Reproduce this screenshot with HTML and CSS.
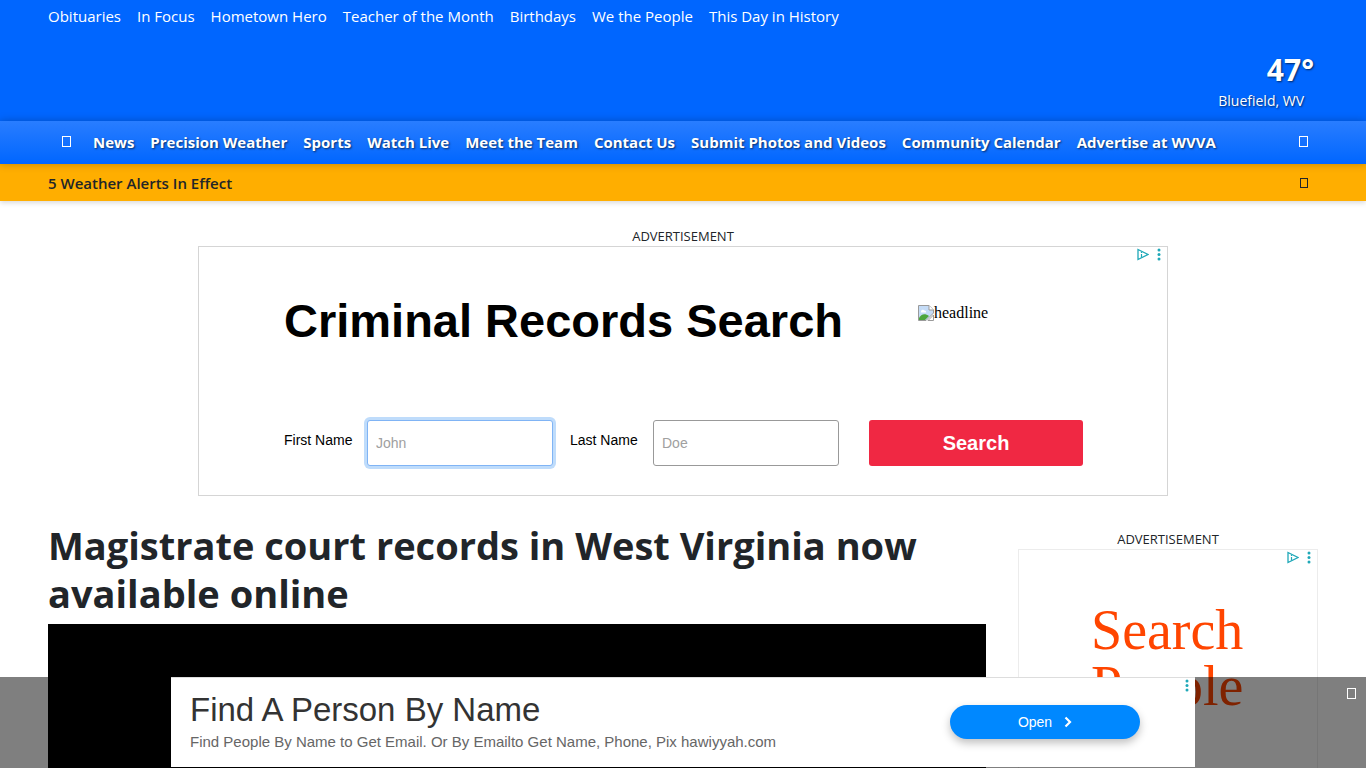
FILE: index.html
```html
<!DOCTYPE html>
<html lang="en">
<head>
    <meta charset="UTF-8">
    <meta name="viewport" content="width=device-width, initial-scale=1.0">
    <title>Magistrate court records in West Virginia now available online</title>
    <link rel="stylesheet" href="styles.css">
</head>
<body>

    <header class="header">
        <nav class="top-links" aria-label="Featured">
            <a href="#">Obituaries</a>
            <a href="#">In Focus</a>
            <a href="#">Hometown Hero</a>
            <a href="#">Teacher of the Month</a>
            <a href="#">Birthdays</a>
            <a href="#">We the People</a>
            <a href="#">This Day in History</a>
        </nav>
        <a class="weather" href="#">
            <span class="temp">47°</span>
            <span class="city">Bluefield, WV</span>
        </a>
    </header>

    <nav class="navbar" aria-label="Main">
        <a class="home" href="#" aria-label="Home"><span class="glyph"></span></a>
        <a href="#">News</a>
        <a href="#">Precision Weather</a>
        <a href="#">Sports</a>
        <a href="#">Watch Live</a>
        <a href="#">Meet the Team</a>
        <a href="#">Contact Us</a>
        <a href="#">Submit Photos and Videos</a>
        <a href="#">Community Calendar</a>
        <a href="#">Advertise at WVVA</a>
        <button class="icon-button search-toggle" type="button" aria-label="Search"><span class="glyph"></span></button>
    </nav>

    <div class="alert-bar">
        <a href="#">5 Weather Alerts In Effect</a>
        <button class="icon-button" type="button" aria-label="Show alerts"><span class="glyph glyph-small"></span></button>
    </div>

    <main>
        <section class="leaderboard">
            <p class="ad-label">ADVERTISEMENT</p>
            <div class="ad-records">
                <div class="ad-choices">
                    <svg width="12" height="13" viewBox="0 0 12 13"><path d="M1 1.500 L11 6.500 L1 11.500 Z" fill="none" stroke="#1fa8b8" stroke-width="1.300"/><path d="M4.500 4 V5 M4.500 6 V9.500" stroke="#1fa8b8" stroke-width="1.200"/></svg>
                    <svg width="4" height="13" viewBox="0 0 4 13" fill="#1fa8b8"><circle cx="2" cy="2" r="1.5"/><circle cx="2" cy="6.5" r="1.5"/><circle cx="2" cy="11" r="1.5"/></svg>
                </div>
                <div class="ad-head">
                    <h2>Criminal Records Search</h2>
                    <span class="broken-image">
                        <svg width="16" height="16" viewBox="0 0 16 16">
                            <path d="M.5.5H11L15.500 5V8L8 15.500H.5Z" fill="#c5dcf7" stroke="#9a9a9a"/>
                            <path d="M11 .5V5H15.500" fill="#fff" stroke="#9a9a9a"/>
                            <path d="M3 6.500a2 2 0 0 1 3.500-1 1.500 1.500 0 0 1 1.500 2H3Z" fill="#fff"/>
                            <path d="M1 13C3 9 7 8 11 11L7 15H1Z" fill="#4da63c"/>
                            <path d="M15.500 10V15.500H10Z" fill="#fff" stroke="#9a9a9a"/>
                        </svg>headline</span>
                </div>
                <form class="ad-form">
                    <label for="first-name">First Name</label>
                    <input class="focused" id="first-name" type="text" placeholder="John">
                    <label for="last-name">Last Name</label>
                    <input id="last-name" type="text" placeholder="Doe">
                    <button type="button">Search</button>
                </form>
            </div>
        </section>

        <div class="content">
            <article>
                <h1>Magistrate court records in West Virginia now available online</h1>
                <div class="video"></div>
            </article>
            <aside>
                <p class="ad-label">ADVERTISEMENT</p>
                <div class="ad-people">
                    <div class="ad-choices">
                        <svg width="12" height="13" viewBox="0 0 12 13"><path d="M1 1.500 L11 6.500 L1 11.500 Z" fill="none" stroke="#1fa8b8" stroke-width="1.300"/><path d="M4.500 4 V5 M4.500 6 V9.500" stroke="#1fa8b8" stroke-width="1.200"/></svg>
                        <svg width="4" height="13" viewBox="0 0 4 13" fill="#1fa8b8"><circle cx="2" cy="2" r="1.5"/><circle cx="2" cy="6.5" r="1.5"/><circle cx="2" cy="11" r="1.5"/></svg>
                    </div>
                    <a href="#">Search People</a>
                </div>
            </aside>
        </div>
    </main>

    <div class="sticky-ad">
        <div class="banner">
            <div class="banner-text">
                <h2>Find A Person By Name</h2>
                <p>Find People By Name to Get Email. Or By Emailto Get Name, Phone, Pix hawiyyah.com</p>
            </div>
            <a class="open-button" href="#">Open
                <svg width="8" height="12" viewBox="0 0 8 12"><path d="M1.500 1.500 L6 6 L1.500 10.500" fill="none" stroke="#fff" stroke-width="2.200"/></svg>
            </a>
            <svg class="banner-menu" width="4" height="13" viewBox="0 0 4 13" fill="#1fa8b8"><circle cx="2" cy="2" r="1.5"/><circle cx="2" cy="6.5" r="1.5"/><circle cx="2" cy="11" r="1.5"/></svg>
        </div>
        <button class="icon-button close" type="button" aria-label="Close"><span class="glyph"></span></button>
    </div>

</body>
</html>
```
FILE: styles.css
```css
* {
    box-sizing: border-box;
}

body {
    margin: 0;
    font-family: "Open Sans", "Noto Sans", sans-serif;
    font-size: 15px;
    line-height: 24px;
    color: #212529;
    background-color: #fff;
}

h1, h2, p {
    margin: 0;
}

a {
    color: inherit;
    text-decoration: none;
}

.header {
    height: 121px;
    padding: 4px 48px;
    background-color: #06f;
    color: #fff;
}

.top-links {
    display: flex;
    gap: 16px;
}

.weather {
    display: flex;
    flex-direction: column;
    align-items: flex-end;
    padding-top: 22px;
    text-shadow: 1px 1px 2px rgba(0, 0, 0, 0.6);
}

.temp {
    padding-right: 4px;
    font-size: 30px;
    font-weight: 700;
    line-height: 40px;
}

.city {
    padding-right: 14px;
    font-size: 14px;
    line-height: 22px;
}

.navbar {
    position: relative;
    display: flex;
    align-items: center;
    gap: 16px;
    height: 43px;
    padding: 0 48px 2px;
    background: linear-gradient(#297dff, #06f);
    box-shadow: 0 0 8px rgba(0, 0, 0, 0.25);
    color: #fff;
    font-weight: 700;
    white-space: nowrap;
    text-shadow: 1px 1px 2px rgba(0, 0, 0, 0.6);
}

.home {
    display: flex;
    padding: 0 6px 0 14px;
}

.glyph {
    display: block;
    width: 9px;
    height: 11px;
    border: 1px solid currentColor;
}

.glyph-small {
    width: 8px;
    height: 10px;
}

.icon-button {
    display: flex;
    padding: 0;
    border: 0;
    background: none;
    color: inherit;
    cursor: pointer;
}

.search-toggle {
    margin-left: auto;
    margin-right: 10px;
}

.alert-bar {
    display: flex;
    align-items: center;
    justify-content: space-between;
    height: 37px;
    padding: 0 58px 0 48px;
    background-color: #ffae00;
    box-shadow: 0 2px 5px rgba(0, 0, 0, 0.15);
    font-weight: 600;
}

.leaderboard {
    padding-top: 26px;
}

.ad-label {
    font-size: 13px;
    line-height: 19px;
    text-align: center;
}

.ad-records {
    position: relative;
    max-width: 970px;
    height: 250px;
    margin: 0 auto;
    padding: 44px 84px 29px 85px;
    border: 1px solid #d5d5d5;
    display: flex;
    flex-direction: column;
    justify-content: space-between;
    color: #000;
    font-family: "Liberation Sans", Arial, sans-serif;
}

.ad-choices {
    position: absolute;
    top: 1px;
    right: 6px;
    display: flex;
    gap: 8px;
}

.ad-head {
    display: flex;
    gap: 75px;
}

.ad-head h2 {
    font-size: 47px;
    line-height: 60px;
}

.broken-image {
    display: flex;
    align-items: center;
    height: 16px;
    margin-top: 14px;
    font-family: "Liberation Serif", "Times New Roman", serif;
    font-size: 16px;
}

.ad-form {
    display: flex;
    align-items: center;
    font-size: 14px;
}

.ad-form label {
    width: 83px;
    padding-bottom: 6px;
}

.ad-form input {
    width: 186px;
    height: 46px;
    margin-right: 17px;
    padding: 0 8px;
    border: 1px solid #999;
    border-radius: 3px;
    font-family: inherit;
    font-size: 14px;
}

.ad-form input::placeholder {
    color: #a0a0a0;
}

.ad-form .focused {
    border-color: #80b4f5;
    box-shadow: 0 0 0 3px #bfdcfb;
}

.ad-form button {
    width: 214px;
    height: 46px;
    margin-left: auto;
    border: 0;
    border-radius: 3px;
    background-color: #f02843;
    color: #fff;
    font-family: inherit;
    font-size: 20px;
    font-weight: 700;
}

.content {
    display: grid;
    grid-template-columns: 1fr 300px;
    gap: 32px;
    padding: 25px 48px 0;
}

h1 {
    margin-bottom: 7px;
    font-size: 38px;
    font-weight: 700;
    line-height: 48px;
}

.video {
    aspect-ratio: 16 / 9;
    background-color: #000;
}

aside {
    padding-top: 9px;
}

.ad-people {
    position: relative;
    height: 250px;
    padding: 52px 72px;
    border: 1px solid #ececec;
    color: #ff4500;
    font-family: "Liberation Serif", "Times New Roman", serif;
    font-size: 56px;
    line-height: 56px;
}

.sticky-ad {
    position: fixed;
    left: 0;
    right: 0;
    bottom: 0;
    display: flex;
    justify-content: center;
    height: 91px;
    background-color: rgba(0, 0, 0, 0.5);
    color: #fff;
}

.banner {
    position: relative;
    display: flex;
    align-items: center;
    justify-content: space-between;
    width: 1024px;
    height: 90px;
    padding: 0 55px 2px 19px;
    background-color: #fff;
    border-top: 1px solid #ddd;
    color: #666;
    font-family: "Liberation Sans", Arial, sans-serif;
}

.banner-text h2 {
    color: #333;
    font-size: 33px;
    font-weight: 400;
    line-height: 40px;
}

.banner-text p {
    font-size: 15px;
}

.open-button {
    display: flex;
    align-items: center;
    justify-content: center;
    gap: 12px;
    width: 190px;
    height: 34px;
    border-radius: 17px;
    background-color: #0088ff;
    box-shadow: 0 4px 8px rgba(0, 0, 0, 0.25);
    color: #fff;
    font-size: 14px;
}

.banner-menu {
    position: absolute;
    top: 1px;
    right: 6px;
}

.close {
    position: absolute;
    top: 11px;
    right: 10px;
}
```
